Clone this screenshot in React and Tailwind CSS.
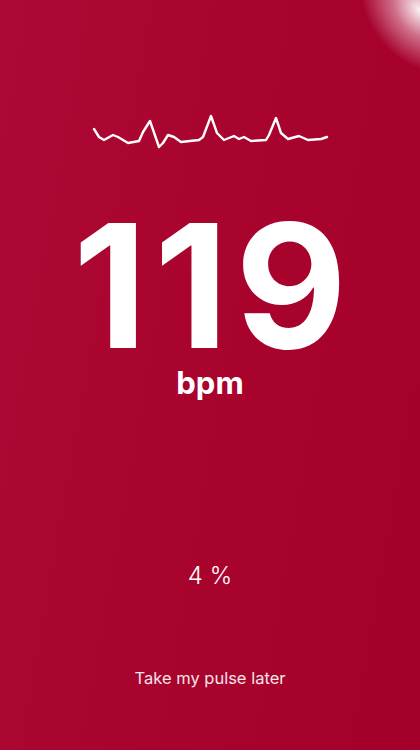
import React from 'react';

const pulse = [
  [93, 129], [98, 137], [103, 140], [112, 135], [117, 137], [127, 143], [138, 141],
  [142, 132], [149, 121], [158, 147], [162, 143], [167, 135], [173, 137], [180, 142],
  [198, 140], [202, 137], [210, 116], [216, 133], [223, 140], [233, 136], [238, 139],
  [243, 137], [250, 141], [265, 140], [268, 135], [275, 118], [280, 133], [287, 139],
  [298, 136], [307, 140], [320, 139], [326, 137],
];

function Waveform() {
  const pts = pulse.map(([x, y]) => `${x - 90},${y - 112}`).join(' ');
  return (
    <svg width="240" height="40" viewBox="0 0 240 40" className="block">
      <polyline
        points={pts}
        fill="none"
        stroke="white"
        strokeWidth="2.4"
        strokeLinejoin="round"
        strokeLinecap="round"
      />
    </svg>
  );
}

export default function App() {
  return (
    <div
      className="relative w-[420px] h-[750px] overflow-hidden bg-[#a7022b] bg-[linear-gradient(100deg,#ad0934_0%,#a8042e_45%,#a5002a_100%)] text-white"
      style={{ fontFamily: 'Inter, "Liberation Sans", sans-serif' }}
    >
      {/* glare in the corner */}
      <div className="absolute -top-[60px] -right-[50px] w-[100px] h-[140px] rounded-full bg-[radial-gradient(closest-side,rgba(255,255,255,0.95)_0%,rgba(240,200,215,0.55)_45%,rgba(200,60,100,0)_100%)] rotate-[-40deg]" />

      <div className="relative flex flex-col items-center">
        <div className="mt-[112px] ml-[2px]">
          <Waveform />
        </div>

        <div className="mt-[58px] pl-[7px] text-[172px] leading-[150px] font-bold tracking-[7px] h-[150px]">
          119
        </div>
        <div className="mt-[5px] text-[31px] leading-[36px] font-bold">bpm</div>

        <div className="mt-[160px] text-[24px] leading-[30px] font-light">4 %</div>

        <div className="mt-[76px] text-[16.5px] leading-[22px] text-white/90">
          Take my pulse later
        </div>
      </div>
    </div>
  );
}
